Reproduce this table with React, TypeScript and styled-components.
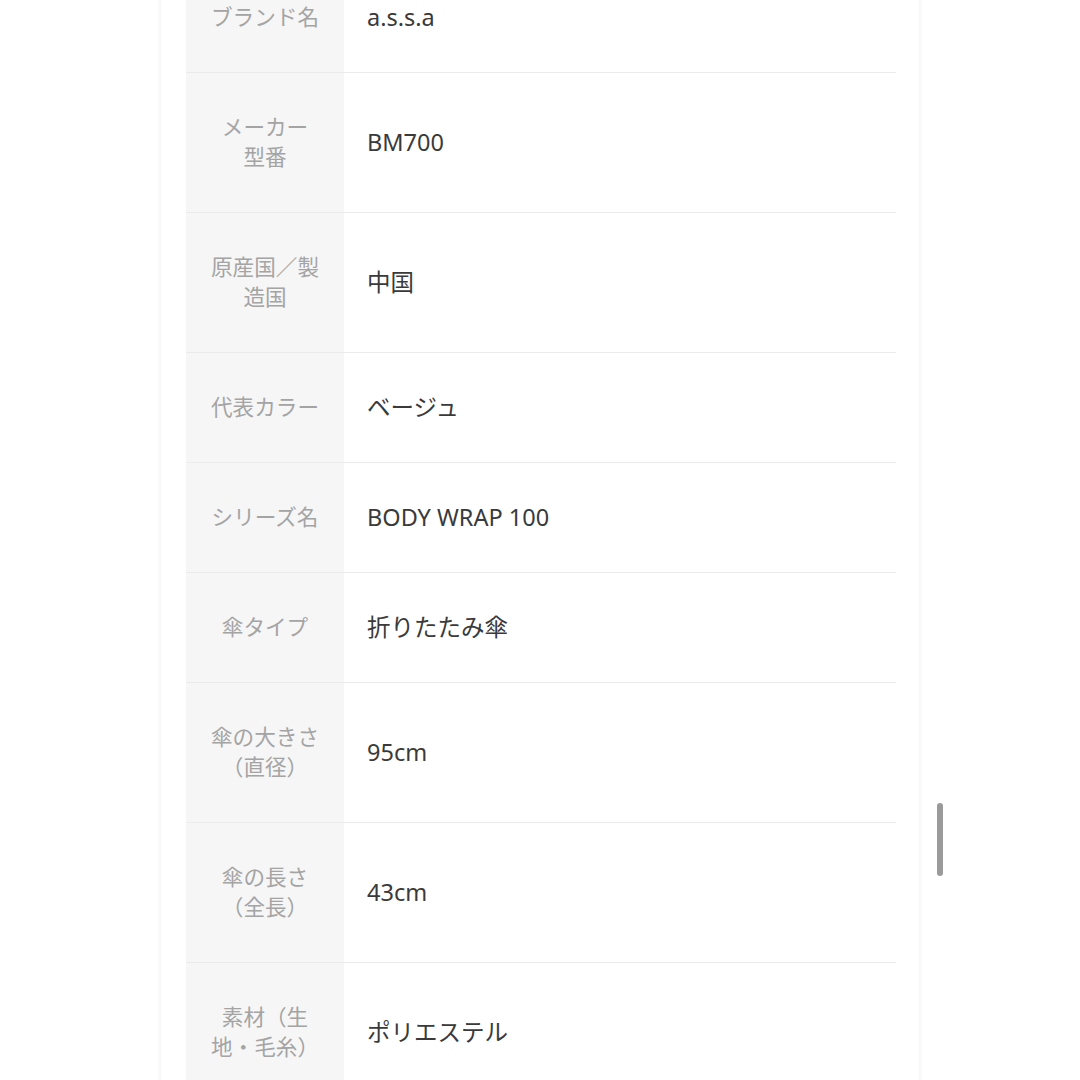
import React from "react";
import styled, { createGlobalStyle } from "styled-components";

const GlobalStyle = createGlobalStyle`
  html, body {
    margin: 0;
    padding: 0;
    background: #ffffff;
    overflow: hidden;
  }
  body {
    font-family: "Noto Sans", "Noto Sans CJK JP", sans-serif;
  }
`;

const Page = styled.div`
  position: relative;
  width: 1080px;
  height: 1080px;
  overflow: hidden;
  background: #ffffff;
`;

const Card = styled.div`
  width: 758px;
  min-height: 1080px;
  margin: 0 auto;
  padding: 0 23px 0 25px;
  box-sizing: border-box;
  background: #ffffff;
  box-shadow: 0 0 5px rgba(0, 0, 0, 0.08);
`;

const SpecTable = styled.div`
  margin-top: -37px;
  display: flex;
  flex-direction: column;
`;

const Row = styled.div`
  display: grid;
  grid-template-columns: 158px 1fr;
  border-bottom: 1px solid #ebebeb;
`;

const Label = styled.div`
  background: #f6f6f6;
  color: #a4a4a4;
  font-size: 21.6px;
  line-height: 30px;
  text-align: center;
  padding: 39px 22px 40px;
  display: flex;
  align-items: center;
  justify-content: center;
`;

const Value = styled.div`
  color: #3a3a3a;
  font-size: 23.5px;
  line-height: 30px;
  padding: 39px 24px 40px 23px;
  display: flex;
  align-items: center;
`;

const ScrollThumb = styled.div`
  position: absolute;
  left: 937px;
  top: 803px;
  width: 6px;
  height: 73px;
  border-radius: 3px;
  background: #9a9a9a;
`;

type Spec = { label: React.ReactNode; value: string };

const specs: Spec[] = [
  { label: "ブランド名", value: "a.s.s.a" },
  { label: <>メーカー<br />型番</>, value: "BM700" },
  { label: <>原産国／製<br />造国</>, value: "中国" },
  { label: "代表カラー", value: "ベージュ" },
  { label: "シリーズ名", value: "BODY WRAP 100" },
  { label: "傘タイプ", value: "折りたたみ傘" },
  { label: <>傘の大きさ<br />（直径）</>, value: "95cm" },
  { label: <>傘の長さ<br />（全長）</>, value: "43cm" },
  { label: <>素材（生<br />地・毛糸）</>, value: "ポリエステル" },
];

const App: React.FC = () => {
  return (
    <Page>
      <GlobalStyle />
      <Card>
        <SpecTable>
          {specs.map((spec, index) => (
            <Row key={index}>
              <Label>{spec.label}</Label>
              <Value>{spec.value}</Value>
            </Row>
          ))}
        </SpecTable>
      </Card>
      <ScrollThumb />
    </Page>
  );
};

export default App;
